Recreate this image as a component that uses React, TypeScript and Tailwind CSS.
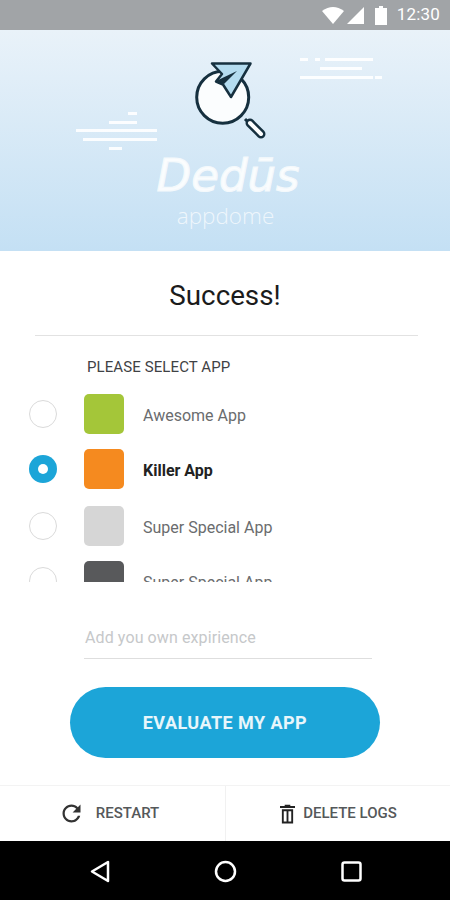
const apps = [
  { name: 'Awesome App', color: 'bg-[#a4c639]', rowClass: 'mt-0', selected: false },
  { name: 'Killer App', color: 'bg-[#f58a1f]', rowClass: 'mt-[15px]', selected: true },
  { name: 'Super Special App', color: 'bg-[#d6d6d6]', rowClass: 'mt-[17px]', selected: false },
  { name: 'Super Special App', color: 'bg-[#58595b]', rowClass: 'mt-[15px]', selected: false },
];

function StatusBar() {
  return (
    <div className="h-[30px] bg-[#a1a4a7] flex items-center justify-end pr-[10px]">
      <svg width="22" height="18" viewBox="0 0 22 18" className="mr-[3px]">
        <path d="M0 5 Q11 -3 22 5 L11 18 Z" fill="#fff" />
      </svg>
      <svg width="18" height="18" viewBox="0 0 18 18" className="mr-[10px]">
        <path d="M0 18 L17 1 V18 Z" fill="#fff" />
      </svg>
      <svg width="12" height="19" viewBox="0 0 12 19" className="mr-[10px]">
        <path d="M4 0 H8 V2 H12 V19 H0 V2 H4 Z" fill="#fff" />
      </svg>
      <span className="text-[17px] text-white font-['Roboto',sans-serif] tracking-[0.2px]">12:30</span>
    </div>
  );
}

function Hero() {
  return (
    <div className="relative h-[221px] bg-gradient-to-b from-[#e9f2f9] to-[#c4e0f4] flex flex-col items-center overflow-hidden">
      {/* side dashes */}
      <svg width="450" height="221" viewBox="0 30 450 221" className="absolute left-0 top-0" fill="#fff" fillOpacity="0.9">
        <rect x="300" y="58" width="8" height="3" />
        <rect x="315" y="58" width="5" height="3" />
        <rect x="325" y="58" width="48" height="3" />
        <rect x="320" y="67" width="42" height="3" />
        <rect x="300" y="76" width="73" height="3" />
        <rect x="375" y="76" width="7" height="3" />
        <rect x="128" y="112" width="9" height="3" />
        <rect x="109" y="121" width="28" height="3" />
        <rect x="76" y="129" width="81" height="3" />
        <rect x="83" y="138" width="74" height="3" />
        <rect x="109" y="147" width="13" height="3" />
      </svg>
      <svg width="80" height="85" viewBox="190 60 80 85" className="relative mt-[30px] ml-[10px] shrink-0">
        <circle cx="222.7" cy="97.3" r="26" fill="#fbfdfe" stroke="#16303f" strokeWidth="3" />
        <path d="M245 119 L250 124" stroke="#16303f" strokeWidth="3" />
        <path d="M250 123 L261 134" stroke="#16303f" strokeWidth="9" strokeLinecap="round" />
        <path d="M250 123 L261 134" stroke="#fff" strokeWidth="4" strokeLinecap="round" />
        <path d="M212 63.5 H250.5 L231 97 L223 84.5 L216 81.5 L222 74 Z" fill="#b4dcf0" stroke="#16303f" strokeWidth="2.5" strokeLinejoin="round" />
        <path d="M216 81 L237 71 L224 84 Z" fill="#16303f" />
      </svg>
      <div className="relative mt-[9px] ml-[6px] text-[45px] leading-[44px] italic text-white/90 [-webkit-text-stroke:1.2px_#f4f9fc] font-['DejaVu_Sans',sans-serif]">
        Dedūs
      </div>
      <div className="relative mt-[4px] ml-[1px] text-[22.5px] leading-[28px] font-light text-white/70 font-['Open_Sans',sans-serif]">
        appdome
      </div>
    </div>
  );
}

function Radio({ selected }: { selected: boolean }) {
  if (selected) {
    return (
      <div className="w-[28px] h-[28px] rounded-full bg-[#1ca5d8] flex items-center justify-center shrink-0">
        <div className="w-[10px] h-[10px] rounded-full bg-white" />
      </div>
    );
  }
  return <div className="w-[28px] h-[28px] rounded-full border border-[#dadada] bg-white shrink-0" />;
}

export default function App() {
  return (
    <div className="w-[450px] h-[900px] bg-white flex flex-col overflow-hidden font-['Roboto',sans-serif]">
      <StatusBar />
      <Hero />

      <div className="h-[85px] mx-[35px] w-[383px] border-b border-[#e2e2e2] flex items-center justify-center pt-[5px]">
        <h1 className="text-[27.75px] text-[#1b1b1b] ml-[-3px]">Success!</h1>
      </div>

      <div className="pl-[87px] mt-[21px] text-[15px] leading-[20px] text-[#3f4245] tracking-[0.1px]">PLEASE SELECT APP</div>

      <div className="relative mt-[17px] h-[188px] overflow-hidden pl-[29px]">
        {apps.map((app, i) => (
          <div key={i} className={`flex items-center h-[40px] ${app.rowClass}`}>
            <Radio selected={app.selected} />
            <div className={`w-[40px] h-[40px] rounded-[5px] ml-[27px] shrink-0 ${app.color}`} />
            <span
              className={`ml-[19px] pt-[3px] text-[16px] ${app.selected ? 'font-bold text-[#222]' : 'text-[#6a6c6e]'}`}
            >
              {app.name}
            </span>
          </div>
        ))}
      </div>

      <div className="ml-[84px] w-[288px] mt-[42px] h-[35px] border-b border-[#dedede] pt-[2px] text-[16px] leading-[24px] text-[#c6c8ca] pl-[1px] tracking-[0.1px]">
        Add you own expirience
      </div>

      <button className="mt-[28px] ml-[70px] w-[310px] h-[71px] rounded-full bg-[#1ca5d8] text-white/90 text-[18px] font-bold tracking-[0.45px]">
        EVALUATE MY APP
      </button>

      <div className="mt-[27px] h-[56px] flex border-t border-[#f3f3f3]">
        <div className="w-[226px] border-r border-[#f1f1f1] flex items-center justify-center pr-[8px]">
          <svg width="27" height="27" viewBox="0 0 24 24" className="mr-[11px]">
            <path
              d="M17.65 6.35C16.2 4.9 14.21 4 12 4c-4.42 0-7.99 3.58-7.99 8s3.57 8 7.99 8c3.73 0 6.84-2.55 7.73-6h-2.08c-.82 2.33-3.04 4-5.65 4-3.31 0-6-2.69-6-6s2.69-6 6-6c1.66 0 3.14.69 4.22 1.78L13 11h7V4l-2.35 2.35z"
              fill="#333"
            />
          </svg>
          <span className="text-[15px] font-medium text-[#55585a]">RESTART</span>
        </div>
        <div className="flex-1 flex items-center justify-center pl-[1px]">
          <svg width="15" height="20" viewBox="0 0 16 20" className="mr-[8px]">
            <path d="M5 0 H11 V1.5 H16 V3.5 H0 V1.5 H5 Z" fill="#222" />
            <path d="M2 5 H14 V20 H2 Z M4 7 V18 H7 V7 Z M9 7 V18 H12 V7 Z" fill="#222" fillRule="evenodd" />
          </svg>
          <span className="text-[15px] font-medium text-[#55585a]">DELETE LOGS</span>
        </div>
      </div>

      <div className="flex-1 bg-black flex items-center">
        <svg width="450" height="30" viewBox="0 0 450 30" fill="none" stroke="#fff" strokeWidth="2.5">
          <path d="M108 6 V25 L92 15.5 Z" strokeLinejoin="round" />
          <circle cx="225.500" cy="15.500" r="9.500" />
          <rect x="342.500" y="6.500" width="18" height="18" rx="2" />
        </svg>
      </div>
    </div>
  );
}
